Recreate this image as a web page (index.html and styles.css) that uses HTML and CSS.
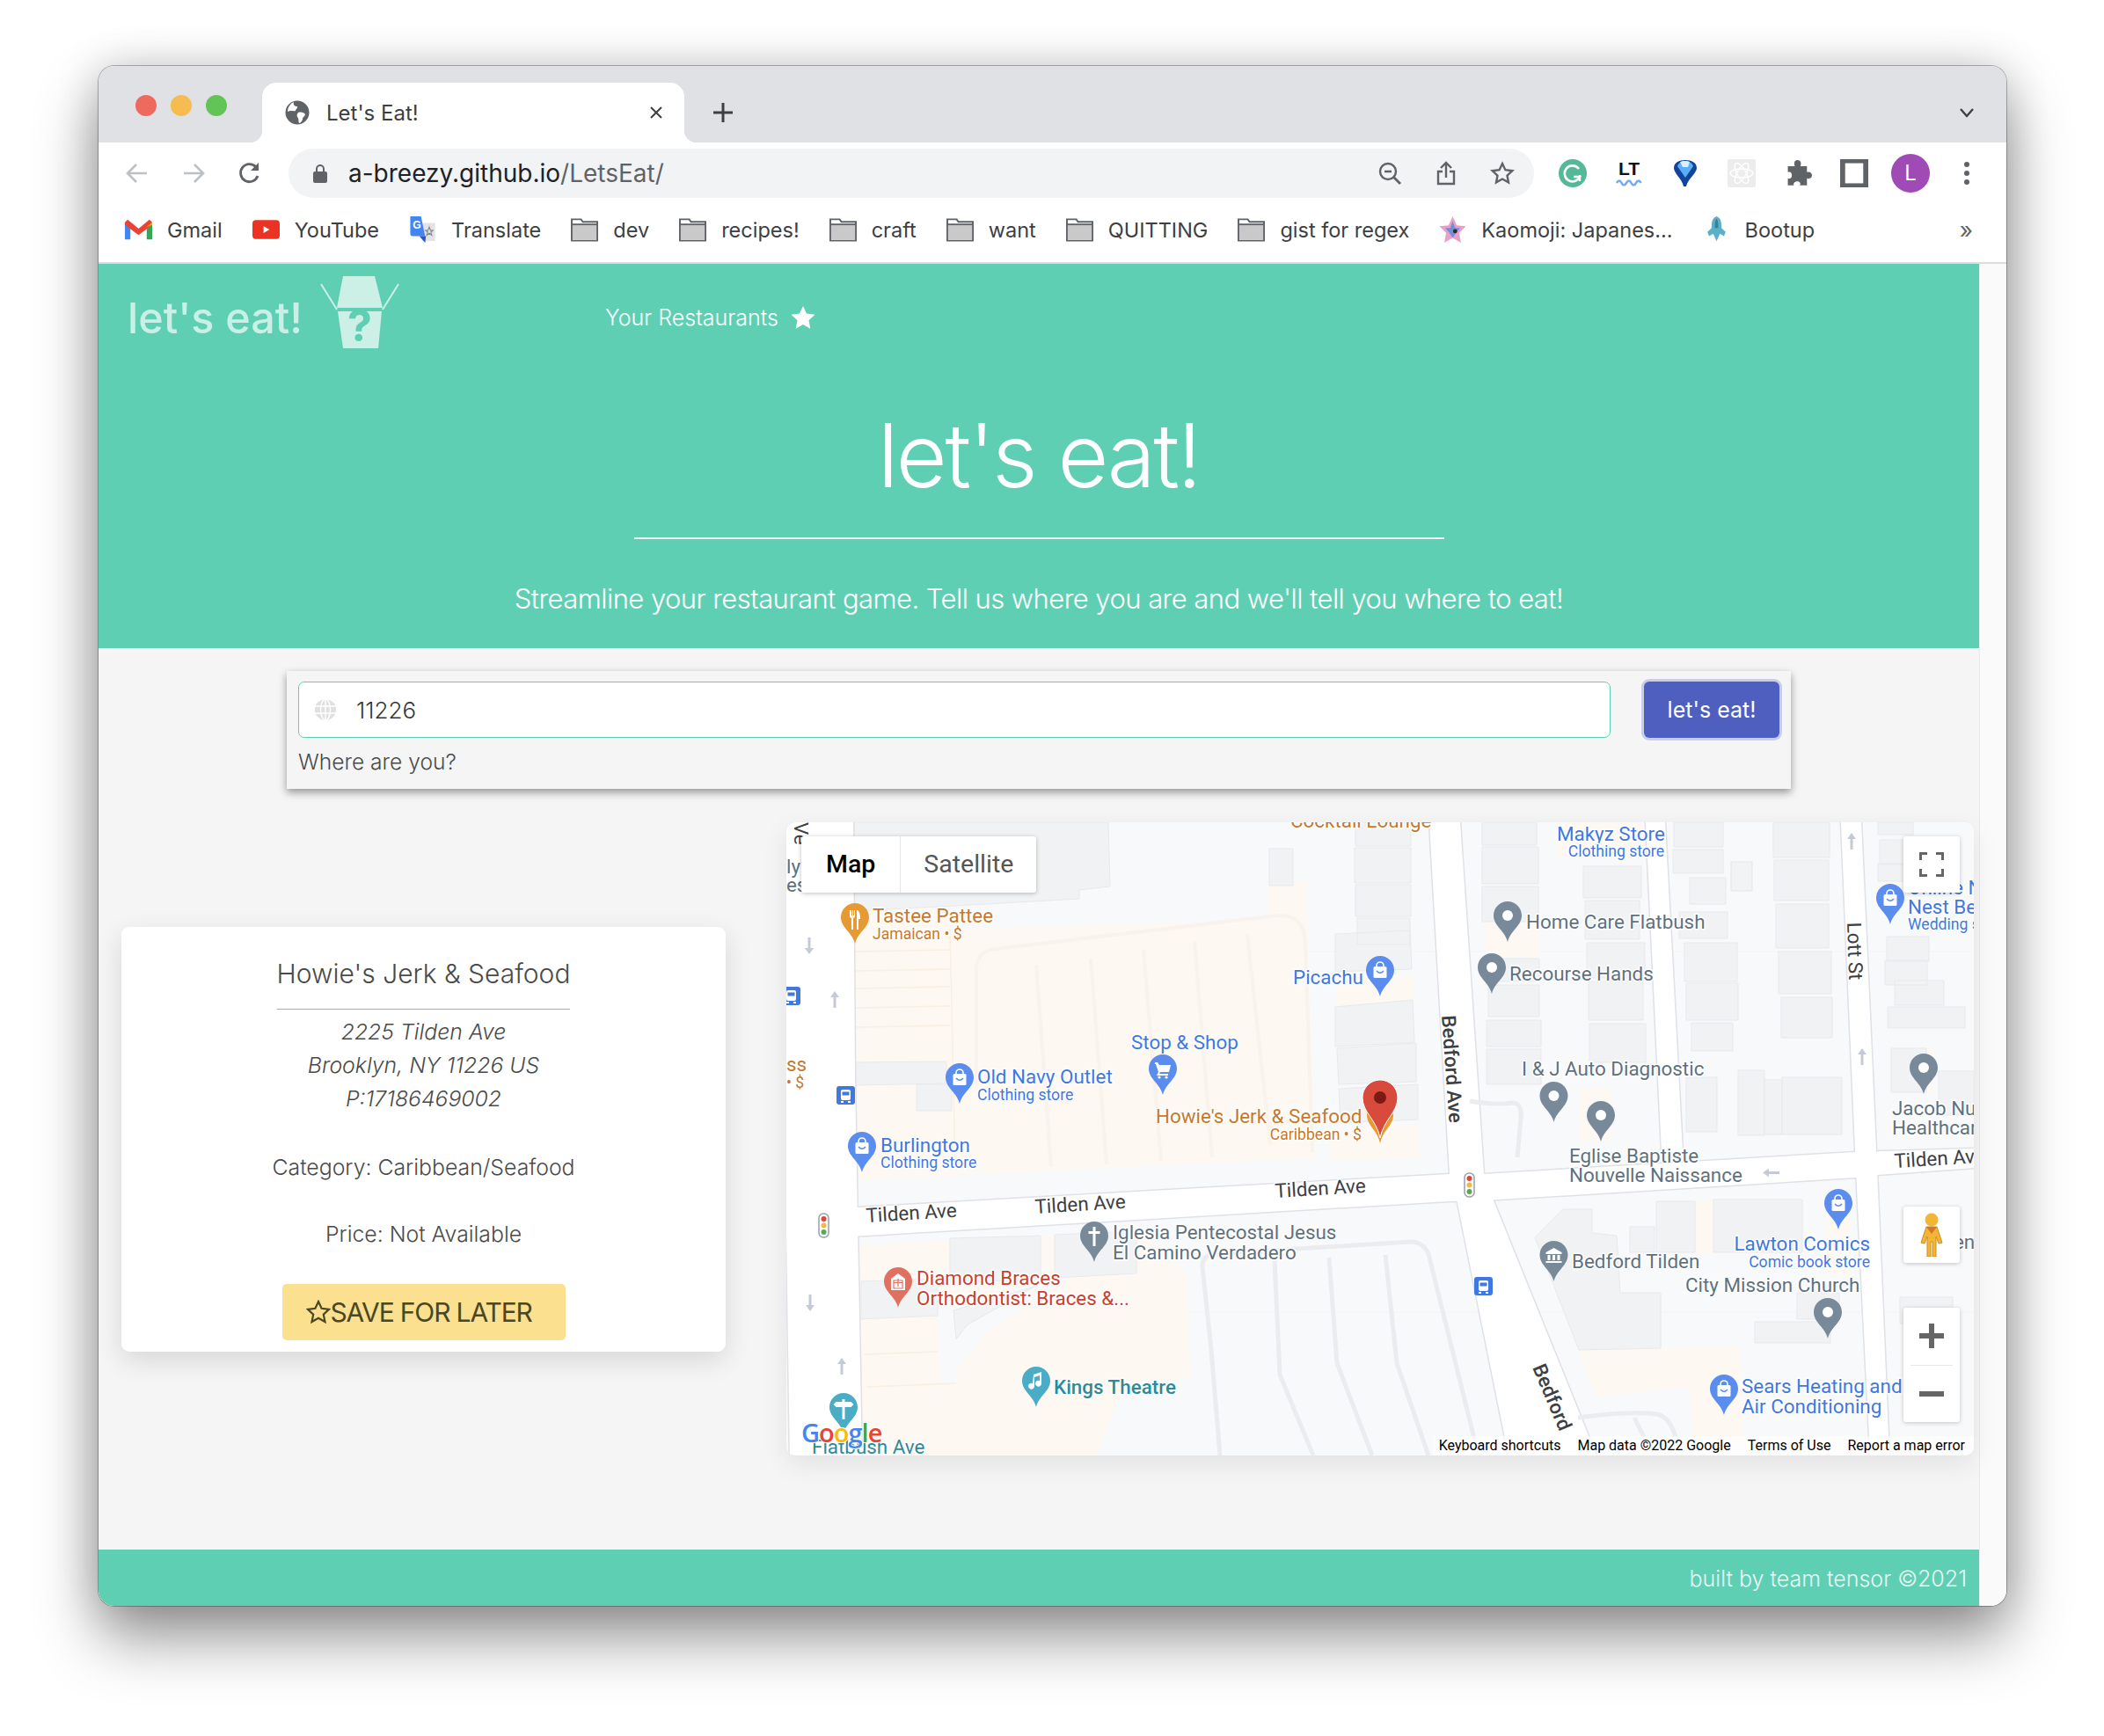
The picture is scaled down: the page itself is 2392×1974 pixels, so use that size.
FILE: index.html
```html
<!DOCTYPE html>
<html lang="en">
<head>
    <meta charset="UTF-8">
    <meta name="viewport" content="width=device-width, initial-scale=1.0">
    <title>Let's Eat!</title>
    <link rel="stylesheet" href="styles.css">
</head>
<body>

<div class="window">
    <div class="tabstrip">
        <div class="lights"><span class="light red"></span><span class="light amber"></span><span class="light green"></span></div>
        <div class="tab">
            <svg class="favicon" viewBox="0 0 28 28"><circle cx="14" cy="14" r="13.5" fill="#5f6368"/><path d="M10 2c-1 3 1 5 4 5 1 2-2 3-2 5-3 1-6-1-9 1C3 8 6 4 10 2zM15 14c3-1 7 0 8 2 0 2-3 3-3 5s-2 5-4 5c-1-3 0-5-2-7-1-2 0-4 1-5z" fill="#fff"/></svg>
            <span class="tab-title">Let's Eat!</span>
            <svg class="tab-close" viewBox="0 0 16 16"><path d="M2 2l12 12M14 2L2 14" stroke="#3c4043" stroke-width="2" fill="none"/></svg>
        </div>
        <svg class="new-tab" viewBox="0 0 24 24"><path d="M12 1v22M1 12h22" stroke="#3c4043" stroke-width="3" fill="none"/></svg>
        <svg class="tab-menu" viewBox="0 0 18 12"><path d="M2 2l7 8 7-8" stroke="#3c4043" stroke-width="2.4" fill="none"/></svg>
    </div>

    <div class="toolbar">
        <div class="tool"><svg viewBox="0 0 28 28" class="ico"><path d="M25 14H4M13 4L3 14l10 10" stroke="#bdc1c6" stroke-width="2.6" fill="none"/></svg></div>
        <div class="tool"><svg viewBox="0 0 28 28" class="ico"><path d="M3 14h21M15 4l10 10-10 10" stroke="#bdc1c6" stroke-width="2.6" fill="none"/></svg></div>
        <div class="tool"><svg viewBox="0 0 28 28" class="ico"><path d="M23 17a10 10 0 1 1-2-10" stroke="#5f6368" stroke-width="2.8" fill="none"/><path d="M24 2v9h-9z" fill="#5f6368"/></svg></div>
        <div class="omnibox">
            <svg class="lock" viewBox="0 0 16 22"><path d="M4 9V6a4 4 0 0 1 8 0v3" stroke="#5f6368" stroke-width="2" fill="none"/><rect x="0" y="9" width="16" height="13" rx="2" fill="#5f6368"/></svg>
            <span class="url">a-breezy.github.io<span class="url-path">/LetsEat/</span></span>
            <div class="omni-icons">
                <div class="tool"><svg viewBox="0 0 28 28" class="ico"><circle cx="12" cy="12" r="9" stroke="#5f6368" stroke-width="2.4" fill="none"/><path d="M18 18l8 8" stroke="#5f6368" stroke-width="2.8"/><path d="M8 12h8" stroke="#5f6368" stroke-width="2.4"/></svg></div>
                <div class="tool"><svg viewBox="0 0 28 28" class="ico"><path d="M14 19V2M8 8l6-6 6 6M10 12H5v14h18V12h-5" stroke="#5f6368" stroke-width="2.4" fill="none"/></svg></div>
                <div class="tool"><svg viewBox="0 0 28 28" class="ico"><path d="M14 3l3.4 7.2 7.9 1-5.800 5.400 1.500 7.800L14 20.500l-7 3.900 1.500-7.800L2.700 11.200l7.900-1z" stroke="#5f6368" stroke-width="2.400" fill="none"/></svg></div>
            </div>
        </div>
        <div class="extensions">
            <div class="tool"><svg viewBox="0 0 32 32" class="ico-lg"><circle cx="16" cy="16" r="16" fill="#55b896"/><path d="M23 11a9 9 0 1 0 1 9h-7" stroke="#fff" stroke-width="2.600" fill="none"/><path d="M24 18v7" stroke="#fff" stroke-width="2.400"/></svg></div>
            <div class="tool"><svg viewBox="0 0 32 32" class="ico-lg"><text x="16" y="18" class="lt-mark">LT</text><path d="M2 27q3-5 5.500 0t5.500 0 5.500 0 5.500 0 5.500 0" stroke="#74a9f7" stroke-width="2.600" fill="none"/></svg></div>
            <div class="tool"><svg viewBox="0 0 32 32" class="ico-lg"><path d="M16 1C9 1 3 4 3 10c0 6 9 12 11 21h3c2-9 12-15 12-21 0-6-6-9-13-9z" fill="#11449a"/><path d="M16 2c-5 0-8 3-9 6l9 13 9-13c-1-3-4-6-9-6z" fill="#5aaef5"/><path d="M10 3l3 6h6l2-6c-3-1.500-8-1.500-11 0z" fill="#d9efff"/></svg></div>
            <div class="tool"><svg viewBox="0 0 32 32" class="ico-lg"><rect width="32" height="32" rx="2" fill="#ececec"/><g fill="none" stroke="#fff" stroke-width="1.400"><ellipse cx="16" cy="16" rx="13" ry="5"/><ellipse cx="16" cy="16" rx="13" ry="5" transform="rotate(60 16 16)"/><ellipse cx="16" cy="16" rx="13" ry="5" transform="rotate(120 16 16)"/></g></svg></div>
            <div class="tool"><svg viewBox="0 0 28 28" class="ico-lg"><path d="M11 2c2-2 6-1 6 2 0 1 0 2-.5 3H23v6c2-1 5 0 5 3s-3 4-5 3v7h-7c1-2 0-4-2.500-4S9 24 10 26H4v-7c2 1 4 0 4-3s-2-4-4-3V7h7c-.5-1-1-3 0-5z" fill="#5f6368"/></svg></div>
            <div class="tool"><svg viewBox="0 0 28 28" class="ico-lg"><rect x="2.500" y="1.500" width="23" height="25" fill="#fff" stroke="#5f6368" stroke-width="5"/></svg></div>
            <div class="tool"><span class="avatar">L</span></div>
            <div class="tool"><svg viewBox="0 0 8 28" class="dots"><circle cx="4" cy="4" r="3"/><circle cx="4" cy="14" r="3"/><circle cx="4" cy="24" r="3"/></svg></div>
        </div>
    </div>

    <div class="bookmarks">
        <a class="bm"><svg class="bm-ico" viewBox="0 0 30 22"><path d="M0 22V3l6 5v14z" fill="#4285f4"/><path d="M30 22V3l-6 5v14z" fill="#34a853"/><path d="M0 3l3-3 12 10L27 0l3 3v3L15 17 0 6z" fill="#ea4335"/><path d="M24 8l6-5v3z" fill="#fbbc05"/></svg>Gmail</a>
        <a class="bm"><svg class="bm-ico" viewBox="0 0 32 22"><rect width="32" height="22" rx="4" fill="#ea3323"/><path d="M13 7l7 4-7 4z" fill="#fff"/></svg>YouTube</a>
        <a class="bm"><svg class="bm-ico" viewBox="0 0 30 32"><path d="M14 8h16v22H14z" fill="#e3e3e3"/><path d="M0 0h13l5 24H3a3 3 0 0 1-3-3z" fill="#4285f4"/><path d="M19 24l-1 8-7-8z" fill="#2a56c6"/><text x="8" y="15" class="tr-mark">G</text><path d="M23 13l1.500 4h3l-2.500 2 1 4-3-2.500-3 2.500 1-4-2.500-2h3z" fill="none" stroke="#80868b" stroke-width="1.200"/></svg>Translate</a>
        <a class="bm"><svg class="bm-ico" viewBox="0 0 32 28"><use href="#folder"/></svg>dev</a>
        <a class="bm"><svg class="bm-ico" viewBox="0 0 32 28"><use href="#folder"/></svg>recipes!</a>
        <a class="bm"><svg class="bm-ico" viewBox="0 0 32 28"><use href="#folder"/></svg>craft</a>
        <a class="bm"><svg class="bm-ico" viewBox="0 0 32 28"><use href="#folder"/></svg>want</a>
        <a class="bm"><svg class="bm-ico" viewBox="0 0 32 28"><use href="#folder"/></svg>QUITTING</a>
        <a class="bm"><svg class="bm-ico" viewBox="0 0 32 28"><use href="#folder"/></svg>gist for regex</a>
        <a class="bm"><svg class="bm-ico" viewBox="0 0 32 32"><path d="M16 0l5 11 11 1-8 8 2 12-10-6-10 6 2-12-8-8 11-1z" fill="#e8a0c8"/><path d="M16 6l3 8h6l-5 6-4 6-4-6-5-6h6z" fill="#6f8fd8"/><circle cx="19" cy="18" r="2.600" fill="#2b2b2b"/></svg>Kaomoji: Japanes...</a>
        <a class="bm"><svg class="bm-ico" viewBox="0 0 28 32"><path d="M14 0c5 2 6 6 6 14l5 5-2 5-5-3-4 9-4-9-5 3-2-5 5-5C8 6 9 2 14 0z" fill="#5bb0c8"/><path d="M14 3c2 2 2 6 2 11h-4c0-5 0-9 2-11z" fill="#37809a"/></svg>Bootup</a>
        <span class="bm-more">»</span>
    </div>

    <svg class="defs" aria-hidden="true">
        <defs>
            <g id="folder"><path d="M1 27V2h11l2 3h17v22z" fill="#fff" stroke="#5f6368" stroke-width="2"/><rect x="2" y="9" width="28" height="17" fill="#c9c9c9"/><path d="M1 8h30" stroke="#5f6368" stroke-width="2"/></g>
        </defs>
    </svg>

    <div class="viewport">
        <div class="page">
            <header class="hero">
                <nav class="site-nav">
                    <div class="brand">
                        <span class="brand-name">let's eat!</span>
                        <svg class="brand-box" viewBox="0 0 90 82"><path d="M26 0h36l9 36H19z" fill="#ccefe6"/><path d="M20 40h50l-4 42H26z" fill="#ccefe6"/><path d="M1 9l18 29M89 9L71 38" stroke="#ccefe6" stroke-width="2" fill="none"/><text x="45" y="74" class="box-mark">?</text></svg>
                    </div>
                    <a class="nav-link">Your Restaurants
                        <svg class="nav-star" viewBox="0 0 28 28"><path d="M14 1l4 8.600 9.500 1.200-7 6.500 1.800 9.400L14 22l-8.300 4.700 1.800-9.400-7-6.500L10 9.600z" fill="#fff"/></svg>
                    </a>
                </nav>
                <h1 class="hero-title">let's eat!</h1>
                <div class="hero-rule"></div>
                <p class="hero-sub">Streamline your restaurant game. Tell us where you are and we'll tell you where to eat!</p>
            </header>

            <section class="search">
                <div class="search-row">
                    <div class="field">
                        <svg class="field-globe" viewBox="0 0 24 24"><circle cx="12" cy="12" r="12" fill="#e0e0e0"/><g stroke="#fff" stroke-width="1.400" fill="none"><ellipse cx="12" cy="12" rx="5.500" ry="12"/><path d="M12 0v24M0 8h24M0 16h24"/></g></svg>
                        <input class="field-input" type="text" value="11226">
                    </div>
                    <button class="go-btn">let's eat!</button>
                </div>
                <p class="search-hint">Where are you?</p>
            </section>

            <section class="results">
                <article class="card">
                    <h2 class="card-title">Howie's Jerk &amp; Seafood</h2>
                    <address class="card-addr">2225 Tilden Ave<br>Brooklyn, NY 11226 US<br>P:17186469002</address>
                    <p class="card-line">Category: Caribbean/Seafood</p>
                    <p class="card-line">Price: Not Available</p>
                    <button class="save-btn">
                        <svg class="save-star" viewBox="0 0 28 28"><path d="M14 2l3.600 7.800 8.400 1-6.200 5.800 1.700 8.400L14 20.800 6.500 25l1.700-8.400L2 10.800l8.400-1z" fill="none" stroke="#4b4722" stroke-width="2.200"/></svg>SAVE FOR LATER
                    </button>
                </article>

                <div class="map">
                    <svg class="map-canvas" viewBox="894 935 1350 720" width="1350" height="720">
                        <defs>
                            <path id="pin" d="M16 0C7.200 0 0 7.200 0 16c0 12 13 17 16 30 3-13 16-18 16-30C32 7.200 24.800 0 16 0z"/>
                            <g id="bag"><rect x="8.500" y="12" width="15" height="13" rx="1.500" fill="#fff"/><path d="M12 13v-2a4 4 0 0 1 8 0v2" stroke="#fff" stroke-width="1.600" fill="none"/><path d="M12 17q4 4.500 8 0" stroke="#5b8def" stroke-width="1.500" fill="none"/></g>
                            <g id="dot"><circle cx="16" cy="16" r="6" fill="#fff"/></g>
                            <g id="bus"><rect width="21" height="21" rx="3" fill="#3f78e0"/><rect x="5" y="4" width="11" height="12" rx="2" fill="#fff"/><rect x="6.500" y="6.500" width="8" height="4" fill="#3f78e0"/><path d="M5 17h3v2H5zM13 17h3v2h-3z" fill="#fff"/></g>
                            <g id="signal"><rect x="1" y="1" width="11" height="27" rx="5" fill="#fff" stroke="#9aa0a6" stroke-width="1.500"/><circle cx="6.500" cy="7" r="3" fill="#d9483b"/><circle cx="6.500" cy="14.500" r="3" fill="#f4b73f"/><circle cx="6.500" cy="22" r="3" fill="#5aa75a"/></g>
                            <path id="arrow" d="M0 7l5-7 5 7H6.500v12h-3V7z"/>
                            <g id="roads">
                                <path d="M892 935h78l2 290 8 440H898l-4-270z"/>
                                <path d="M894 1373l81 0 673-38h39l423-25 134-4v22l-110 8-24 3-423 26-40 1-680 40-73-1z"/>
                                <path d="M1625 935h35l27 400 8 23 120 297h-100l-60-297-7-23z"/>
                                <path d="M1871 935h22l20 375h-24z"/>
                                <path d="M2093 935h23l18 395 14 325h-22l-16-325z"/>
                            </g>
                        </defs>

                        <rect class="ground" x="894" y="935" width="1350" height="720"/>
                        <path class="seam" d="M894 1082h1350M894 1492h1350"/>

                        <!-- commercial areas -->
                        <path class="cream" d="M969 1025l100-2 11 33 361-8v-46l44-1 10 316-518 25z"/>
                        <path class="cream" d="M977 1416l316-16 55 47 6 121-76 4-31 83H977z"/>
                        <path class="cream" d="M1794 1535l184-4 4 109h-57l-4-62-107 10z"/>
                        <path class="cream" d="M1512 1283l100-3 2 37-102 3zM1520 1113l87-3 1 30-88 3zM1770 935h122v38l-122 1zM1690 1030h60v57h-60zM1795 1237h36v60h-36zM2170 1192h28v50h-28zM1927 1366h21v60h-21zM2076 1380h28v70h-28z"/>
                        <path class="ground" d="M1066 1485l151-32-92 59-38 45v16h-18z"/>
                        <path class="cream-line" d="M970 1082l110-2M970 1104l110-2M970 1124l110-2M970 1146l110-2M970 1168l110-2M1080 1056l6 270M982 1540l84-3M985 1577l102-4"/>

                        <!-- buildings -->
                        <g class="bld">
                            <path d="M971 935h289l2 73-35 4v10l-142 8-114 6z"/>
                            <path d="M972 1208l104-1v25l-104 2zM1042 1233h40v30h-40zM1443 965h27v42h-27z"/>
                            <path d="M1541 935h63v27h-63zM1540 964h64v40h-64zM1541 1006h63v36h-63zM1543 1044h60v30h-60zM1518 1062l85-4 2 44-87 3zM1518 1145l88-8 2 48-90 5zM1520 1192l90-6v44l-88 3zM1522 1238l90-5v40l-88 4z"/>
                            <path d="M1685 935h62v26h-62zM1685 963h64v42h-64zM1685 1008h64v40h-64zM1690 1090h60v26h-60zM1692 1120h58v36h-58zM1690 1160h62v30h-62zM1690 1193h62v40h-62z"/>
                            <path d="M1800 985h66v36h-66zM1802 1024h62v44h-62zM1804 1072h66v40h-66zM1806 1116h62v44h-62zM1807 1164h64v44h-64z"/>
                            <path d="M1903 935h56v28h-56zM1902 966h57v27h-57zM1921 998h41v30h-41zM1909 1037h55v30h-55zM1915 1072h60v44h-60zM1917 1118h59v42h-59zM1923 1163h47v32h-47z"/>
                            <path d="M2016 935h64v40h-64zM2017 978h62v46h-62zM2019 1028h60v50h-60zM2022 1082h60v48h-60zM2025 1134h58v46h-58z"/>
                            <path d="M1917 1225h35v62h-35zM1976 1217h30v74h-30zM2006 1228h20v62h-20zM2026 1225h68v65h-68z"/>
                            <path d="M2135 935h40v14h-40zM2137 955h28v28h-28zM2135 982h30v20h-30zM2145 1065h48v28h-48zM2143 1092h48v28h-48zM2154 1115h56v28h-56zM2146 1145h88v24h-88zM2150 1192h40v50h-40zM2204 1218h40v50h-40z"/>
                            <path d="M1745 1407l32-32h33v27l28 3 4 65h46v63l-93 2z"/>
                            <path d="M1883 1366h44v58h-44zM1948 1364h101v60h-101zM1853 1395h28v29h-28zM1995 1503h86v24h-86zM2043 1470h48v30h-48z"/>
                            <path d="M1080 1408l103-3v50l-103 3zM1199 1404l93-4v48l-93 5zM979 1457l87-3v42l-87 4z"/>
                            <path d="M1084 1490l92-27-77 44-12 16z"/>
                            <path d="M2160 1475h60v30h-60z"/>
                        </g>
                        <rect class="plot" x="1968" y="980" width="24" height="33"/>

                        <!-- roads -->
                        <use class="road-edge" href="#roads"/>
                        <use class="road-fill" href="#roads"/>

                        <!-- parking lot and driveway outlines -->
                        <g class="lot">
                            <path d="M1110 1233l0-130q0-22 22-24l320-38q30-2 32 30l8 240M1178 1097l17 230M1240 1090l18 234M1300 1080l20 240M1358 1070l20 246M1418 1062l26 240"/>
                        </g>
                        <g class="drive">
                            <path d="M1387 1655l-10-120-10-95q0-12 12-14l225-14q14 0 20 14l62 250M1449 1433l6 130 38 92M1511 1430l9 120 40 105M1575 1427l13 123 36 105"/>
                            <path d="M1671 1252q30 5 48 2 12 0 10 18l-4 44M1794 1612q60-8 90-4 16 4 22 30M1858 1612l14 28"/>
                        </g>

                        <!-- street names -->
                        <text class="lbl road" transform="translate(903 935) rotate(90)">Ve</text>
                        <text class="lbl road b" transform="translate(1639 1155) rotate(86)">Bedford Ave</text>
                        <text class="lbl road" transform="translate(2100 1049) rotate(88)">Lott St</text>
                        <text class="lbl road b" transform="translate(1742 1555) rotate(67)">Bedford</text>
                        <text class="lbl road" transform="translate(985 1390) rotate(-3.500)">Tilden Ave</text>
                        <text class="lbl road" transform="translate(1177 1380) rotate(-3.500)">Tilden Ave</text>
                        <text class="lbl road" transform="translate(1450 1362) rotate(-3.500)">Tilden Ave</text>
                        <text class="lbl road" transform="translate(2154 1328) rotate(-3.500)">Tilden Ave</text>

                        <!-- one-way arrows -->
                        <g class="arw">
                            <use href="#arrow" transform="translate(920 1085) rotate(180) translate(-5 0)"/>
                            <use href="#arrow" x="944" y="1127"/>
                            <use href="#arrow" transform="translate(926 1491) rotate(180)"/>
                            <use href="#arrow" x="952" y="1544"/>
                            <use href="#arrow" x="2100" y="947"/>
                            <use href="#arrow" x="2112" y="1192"/>
                            <use href="#arrow" transform="translate(2004 1333.500) rotate(-90) translate(-5 0)"/>
                        </g>

                        <!-- transit -->
                        <use href="#bus" x="889" y="1122"/>
                        <use href="#bus" x="951" y="1235"/>
                        <use href="#bus" x="1676" y="1452"/>
                        <use href="#signal" x="930" y="1379"/>
                        <use href="#signal" x="1664" y="1333"/>

                        <!-- places -->
                        <g class="pin orange" transform="translate(956 1027)"><use href="#pin"/><path d="M10 8v6q0 3 2 3v13h2V17q2 0 2-3V8h-1v6h-1V8h-1v6h-1V8zM19 8q3 2 3 10h-2v12h-2V8z" fill="#fff"/></g>
                        <text class="lbl orange" x="992" y="1049">Tastee Pattee</text>
                        <text class="lbl orange sub" x="992" y="1068">Jamaican • $</text>

                        <text class="lbl orange" x="1467" y="941">Cocktail Lounge</text>
                        <text class="lbl grey" x="894" y="993">ly</text>
                        <text class="lbl grey" x="894" y="1014">es</text>
                        <text class="lbl orange" x="894" y="1218">ss</text>
                        <text class="lbl orange sub" x="894" y="1237">• $</text>

                        <g class="pin blue" transform="translate(1553 1087)"><use href="#pin"/><use href="#bag"/></g>
                        <text class="lbl blue" x="1470" y="1119">Picachu</text>

                        <text class="lbl blue" x="1286" y="1193">Stop &amp; Shop</text>
                        <g class="pin blue" transform="translate(1306 1199)"><use href="#pin"/><path d="M7 9h3l2 3h13l-2 8H13l-1 2h10v2H9l2-4-3-9H7z" fill="#fff"/><circle cx="12" cy="26" r="1.600" fill="#fff"/><circle cx="20" cy="26" r="1.600" fill="#fff"/></g>

                        <g class="pin blue" transform="translate(1075 1209)"><use href="#pin"/><use href="#bag"/></g>
                        <text class="lbl blue" x="1111" y="1232">Old Navy Outlet</text>
                        <text class="lbl blue sub" x="1111" y="1251">Clothing store</text>

                        <g class="pin blue" transform="translate(964 1287)"><use href="#pin"/><use href="#bag"/></g>
                        <text class="lbl blue" x="1001" y="1310">Burlington</text>
                        <text class="lbl blue sub" x="1001" y="1328">Clothing store</text>

                        <text class="lbl blue" x="1770" y="956">Makyz Store</text>
                        <text class="lbl blue sub end" x="1892" y="974">Clothing store</text>

                        <g class="pin grey" transform="translate(1698 1025)"><use href="#pin"/><use href="#dot"/></g>
                        <text class="lbl grey" x="1735" y="1056">Home Care Flatbush</text>
                        <g class="pin grey" transform="translate(1680 1084)"><use href="#pin"/><use href="#dot"/></g>
                        <text class="lbl grey" x="1716" y="1115">Recourse Hands</text>
                        <text class="lbl grey" x="1730" y="1223">I &amp; J Auto Diagnostic</text>
                        <g class="pin grey" transform="translate(1750.500 1230)"><use href="#pin"/><use href="#dot"/></g>
                        <g class="pin grey" transform="translate(1804 1252)"><use href="#pin"/><use href="#dot"/></g>
                        <g class="pin grey" transform="translate(2171 1198)"><use href="#pin"/><use href="#dot"/></g>
                        <text class="lbl grey" x="2151" y="1268">Jacob Nu</text>
                        <text class="lbl grey" x="2151" y="1290">Healthcar</text>

                        <text class="lbl blue" x="2169" y="1017">Online N</text>
                        <g class="pin blue" transform="translate(2133 1005)"><use href="#pin"/><use href="#bag"/></g>
                        <text class="lbl blue" x="2169" y="1039">Nest Be</text>
                        <text class="lbl blue sub" x="2169" y="1057">Wedding s</text>

                        <text class="lbl grey" x="1784" y="1322">Eglise Baptiste</text>
                        <text class="lbl grey" x="1784" y="1344">Nouvelle Naissance</text>

                        <g class="pin blue" transform="translate(2074 1352)"><use href="#pin"/><use href="#bag"/></g>
                        <text class="lbl blue end" x="2126" y="1422">Lawton Comics</text>
                        <text class="lbl blue sub end" x="2126" y="1441">Comic book store</text>

                        <g class="pin grey" transform="translate(1750.500 1411)"><use href="#pin"/><path d="M16 8l9 5v2H7v-2zM9 16h3v6H9zM14.500 16h3v6h-3zM20 16h3v6h-3zM7 23h18v2H7z" fill="#fff"/></g>
                        <text class="lbl grey" x="1787" y="1442">Bedford Tilden</text>
                        <text class="lbl grey" x="1916" y="1469">City Mission Church</text>
                        <g class="pin grey" transform="translate(2062 1476)"><use href="#pin"/><use href="#dot"/></g>
                        <text class="lbl grey" x="2221" y="1420">en</text>

                        <g class="pin blue" transform="translate(1944 1563)"><use href="#pin"/><use href="#bag"/></g>
                        <text class="lbl blue" x="1980" y="1584">Sears Heating and</text>
                        <text class="lbl blue" x="1980" y="1607">Air Conditioning</text>

                        <g class="pin grey" transform="translate(1228 1389)"><use href="#pin"/><path d="M14.500 6h3v5h5v3h-5v14h-3V14h-5v-3h5z" fill="#fff"/></g>
                        <text class="lbl grey" x="1265" y="1409">Iglesia Pentecostal Jesus</text>
                        <text class="lbl grey" x="1265" y="1432">El Camino Verdadero</text>

                        <g class="pin salmon" transform="translate(1005 1441)"><use href="#pin"/><path d="M16 7l8 6v13H8V13z" fill="#fff"/><path d="M16 13v9M11.500 17.500h9M11 15h10v9H11z" stroke="#e0705f" stroke-width="1.200" fill="none"/></g>
                        <text class="lbl red" x="1042" y="1461">Diamond Braces</text>
                        <text class="lbl red" x="1042" y="1484">Orthodontist: Braces &amp;...</text>

                        <g class="pin aqua" transform="translate(1162 1554)"><use href="#pin"/><path d="M13 9l9-3v13a3.500 3.500 0 1 1-2-3V10l-6 2v10a3.500 3.500 0 1 1-2-3z" fill="#fff"/></g>
                        <text class="lbl teal b" x="1198" y="1585">Kings Theatre</text>

                        <g class="pin aqua" transform="translate(943 1584)"><use href="#pin"/><path d="M14.500 7h3v3h7l3 3-3 3h-7v14h-3V16h-7l-3-3 3-3h7z" fill="#fff"/></g>
                        <text class="lbl teal" x="923" y="1653">Flatbush Ave</text>

                        <!-- selected result -->
                        <g transform="translate(1554 1254)"><path d="M15 0C7 0 0 6 0 14c0 12 12 17 15 32 3-15 15-20 15-32C30 6 23 0 15 0z" fill="#e59a33"/></g>
                        <text class="lbl orange" x="1314" y="1277">Howie's Jerk &amp; Seafood</text>
                        <text class="lbl orange sub end" x="1548" y="1296">Caribbean • $</text>
                        <g transform="translate(1549 1228)"><path d="M20 0C9 0 0 9 0 20c0 17 16 25 20 46 4-21 20-29 20-46C40 9 31 0 20 0z" fill="#d84b3c" stroke="#fff" stroke-width="1"/><circle cx="20" cy="20" r="7" fill="#7a1a12"/></g>

                        <text class="google" x="911" y="1640"><tspan class="g-blue">G</tspan><tspan class="g-red">o</tspan><tspan class="g-yellow">o</tspan><tspan class="g-blue">g</tspan><tspan class="g-green">l</tspan><tspan class="g-red">e</tspan></text>
                    </svg>

                    <div class="map-type">
                        <span class="map-type-btn on">Map</span>
                        <span class="map-type-btn">Satellite</span>
                    </div>
                    <div class="map-tool map-full">
                        <svg viewBox="0 0 28 28" class="full-ico"><path d="M1.500 9V1.500H9M19 1.500h7.500V9M26.500 19v7.500H19M9 26.500H1.500V19" fill="none" stroke="#666" stroke-width="3"/></svg>
                    </div>
                    <div class="map-tool map-peg">
                        <svg viewBox="0 0 28 50" class="peg-ico"><circle cx="14" cy="8" r="7.500" fill="#f2b535"/><path d="M8 16h12l6 18-4 1-3-8v23h-4V33h-2v17H9V27l-3 8-4-1z" fill="#f2b535" stroke="#c98f1e" stroke-width="1"/><path d="M8 16h12l-6 8z" fill="#d2762b"/></svg>
                    </div>
                    <div class="map-tool map-zoom">
                        <div class="zoom-btn"><svg viewBox="0 0 28 28" class="zoom-ico"><path d="M14 0v28M0 14h28" stroke="#666" stroke-width="6"/></svg></div>
                        <div class="zoom-rule"></div>
                        <div class="zoom-btn"><svg viewBox="0 0 28 28" class="zoom-ico"><path d="M0 14h28" stroke="#666" stroke-width="6"/></svg></div>
                    </div>
                    <div class="map-attr">
                        <span>Keyboard shortcuts</span>
                        <span>Map data ©2022 Google</span>
                        <span>Terms of Use</span>
                        <span>Report a map error</span>
                    </div>
                </div>
            </section>

            <footer class="foot">built by team tensor ©2021</footer>
        </div>
        <div class="scrollbar"></div>
    </div>
</div>

</body>
</html>
```

FILE: styles.css
```css
* {
    box-sizing: border-box;
}

html, body {
    margin: 0;
    padding: 0;
    height: 100%;
    background: #fff;
    overflow: hidden;
}

body {
    font-family: Inter, "Liberation Sans", sans-serif;
    padding: 75px 0 0 112px;
}

.window {
    width: 2169px;
    height: 1751px;
    border-radius: 18px;
    overflow: hidden;
    display: flex;
    flex-direction: column;
    background: #fff;
    box-shadow: 0 0 0 1px rgba(0, 0, 0, 0.28), 0 36px 70px rgba(0, 0, 0, 0.42), 0 0 50px rgba(0, 0, 0, 0.16);
}

/* browser chrome */
.tabstrip {
    height: 87px;
    flex: none;
    display: flex;
    background: #dfe1e5;
}

.lights {
    display: flex;
    gap: 16px;
    padding: 33px 0 0 42px;
}

.light {
    width: 24px;
    height: 24px;
    border-radius: 50%;
}

.light.red { background: #ee6a5f; }
.light.amber { background: #f5bd4f; }
.light.green { background: #61c454; }

.tab {
    position: relative;
    width: 480px;
    height: 68px;
    margin: 19px 0 0 40px;
    padding: 0 24px 0 26px;
    display: flex;
    align-items: center;
    background: #fff;
    border-radius: 16px 16px 0 0;
}

.tab::before,
.tab::after {
    content: "";
    position: absolute;
    bottom: 0;
    width: 14px;
    height: 14px;
}

.tab::before {
    left: -14px;
    background: radial-gradient(circle at 0 0, transparent 14px, #fff 14.5px);
}

.tab::after {
    right: -14px;
    background: radial-gradient(circle at 100% 0, transparent 14px, #fff 14.5px);
}

.favicon {
    width: 28px;
    height: 28px;
    flex: none;
}

.tab-title {
    margin-left: 19px;
    font-size: 24px;
    color: #3c4043;
}

.tab-close {
    width: 16px;
    height: 16px;
    margin-left: auto;
}

.new-tab {
    width: 24px;
    height: 24px;
    margin: 41px 0 0 32px;
}

.tab-menu {
    width: 18px;
    height: 12px;
    margin: 47px 36px 0 auto;
}

.toolbar {
    height: 70px;
    flex: none;
    display: flex;
    align-items: center;
    padding-left: 12px;
    background: #fff;
}

.tool {
    width: 64px;
    height: 56px;
    flex: none;
    display: flex;
    align-items: center;
    justify-content: center;
}

.ico {
    width: 28px;
    height: 28px;
}

.ico-lg {
    width: 32px;
    height: 32px;
}

.dots {
    width: 8px;
    height: 28px;
    fill: #5f6368;
}

.avatar {
    width: 44px;
    height: 44px;
    border-radius: 50%;
    background: #a04ab5;
    color: #fff;
    font-size: 24px;
    line-height: 44px;
    text-align: center;
}

.omnibox {
    flex: 1;
    height: 56px;
    margin-left: 12px;
    padding: 0 4px 0 28px;
    display: flex;
    align-items: center;
    background: #f1f3f4;
    border-radius: 28px;
}

.lock {
    width: 16px;
    height: 22px;
    flex: none;
}

.url {
    margin-left: 24px;
    font-size: 28px;
    color: #202124;
}

.url-path {
    color: #5f6368;
}

.omni-icons {
    margin-left: auto;
    display: flex;
}

.extensions {
    display: flex;
    margin: 0 13px 0 12px;
}

.lt-mark {
    font: 700 21px "Liberation Sans", sans-serif;
    text-anchor: middle;
    fill: #111;
}

.tr-mark {
    font: 700 13px "Liberation Sans", sans-serif;
    text-anchor: middle;
    fill: #fff;
}

.bookmarks {
    height: 68px;
    flex: none;
    display: flex;
    align-items: center;
    gap: 34px;
    padding: 0 0 8px 30px;
    background: #fff;
    border-bottom: 2px solid #dadce0;
    font-size: 23.5px;
    color: #3c4043;
}

.bm {
    display: flex;
    align-items: center;
    gap: 17px;
    white-space: nowrap;
}

.bm-ico {
    width: 31px;
    height: 30px;
    flex: none;
}

.bm-more {
    margin: 0 38px 0 auto;
    font-size: 26px;
    color: #5f6368;
}

.defs {
    position: absolute;
    width: 0;
    height: 0;
}

/* page */
.viewport {
    flex: 1;
    display: flex;
    min-height: 0;
}

.page {
    flex: 1;
    display: flex;
    flex-direction: column;
    background: #f5f5f5;
    color: #4a4a4a;
}

.scrollbar {
    width: 31px;
    background: #fafafa;
    border-left: 1px solid #ebebeb;
}

.hero {
    height: 437px;
    flex: none;
    background: #5fcfb4;
    color: #fff;
    text-align: center;
    font-weight: 300;
}

.site-nav {
    height: 110px;
    display: flex;
    align-items: center;
    padding: 12px 0 0 33px;
}

.brand {
    display: flex;
    align-items: center;
    gap: 20px;
    width: 543px;
}

.brand-name {
    font-size: 48.5px;
    font-weight: 500;
    color: #c9f0e6;
    white-space: nowrap;
}

.brand-box {
    width: 90px;
    height: 82px;
    margin-top: -13px;
}

.box-mark {
    font: 700 50px Inter, sans-serif;
    text-anchor: middle;
    fill: #5fcfb4;
}

.nav-link {
    display: flex;
    align-items: center;
    gap: 14px;
    font-size: 25px;
    font-weight: 300;
}

.nav-star {
    width: 28px;
    height: 28px;
}

.hero-title {
    margin: 0;
    padding-top: 48px;
    font-size: 100px;
    letter-spacing: -2.6px;
    line-height: 120px;
    font-weight: 300;
}

.hero-rule {
    width: 921px;
    height: 2px;
    margin: 33px auto 0;
    background: #fff;
}

.hero-sub {
    margin: 48px 0 0;
    font-size: 31px;
    letter-spacing: -0.55px;
    line-height: 40px;
    font-weight: 300;
}

.search {
    width: 1710px;
    height: 134px;
    flex: none;
    margin: 26px auto 0;
    padding: 12px 13px;
    background: #f5f5f5;
    box-shadow: 0 4px 9px rgba(0, 0, 0, 0.4);
}

.search-row {
    display: flex;
    gap: 38px;
}

.field {
    position: relative;
    flex: 1;
}

.field-globe {
    position: absolute;
    left: 19px;
    top: 20px;
    width: 24px;
    height: 24px;
}

.field-input {
    width: 100%;
    height: 64px;
    padding: 0 0 0 65px;
    border: 1px solid #5fcfb4;
    border-radius: 7px;
    background: #fff;
    font: 300 26px Inter, sans-serif;
    color: #363636;
    outline: none;
}

.go-btn {
    width: 154px;
    height: 64px;
    border: none;
    border-radius: 6px;
    background: #4e5fc0;
    box-shadow: 0 0 0 3px #c8cdea;
    color: #fff;
    font: 400 25px Inter, sans-serif;
}

.search-hint {
    margin: 9px 0 0;
    font-size: 24.6px;
    line-height: 36px;
    font-weight: 300;
}

.results {
    display: flex;
    align-items: center;
    gap: 69px;
    margin-top: 38px;
    padding: 0 6px 0 26px;
}

.card {
    width: 687px;
    height: 483px;
    flex: none;
    padding-top: 34px;
    text-align: center;
    background: #fff;
    border-radius: 9px;
    box-shadow: 0 10px 30px rgba(0, 0, 0, 0.12);
    font-weight: 300;
    font-size: 24.8px;
    line-height: 38px;
}

.card-title {
    display: inline-block;
    margin: 0;
    padding-bottom: 21px;
    border-bottom: 1px solid #5fcfb4;
    font-size: 30px;
    font-weight: 300;
    line-height: 38px;
}

.card-addr {
    margin-top: 6px;
    font-style: italic;
}

.card-line {
    margin: 40px 0 0;
}

.card-line + .card-line {
    margin-top: 38px;
}

.save-btn {
    display: flex;
    align-items: center;
    gap: 0;
    width: 322px;
    height: 64px;
    margin: 38px auto 0;
    padding: 0 0 0 27px;
    border: none;
    border-radius: 5px;
    background: #fbe08f;
    color: #4b4722;
    font: 400 30px Inter, sans-serif;
    letter-spacing: -1.15px;
    white-space: nowrap;
}

.save-star {
    width: 28px;
    height: 28px;
    flex: none;
}

/* map */
.map {
    position: relative;
    width: 1350px;
    height: 720px;
    flex: none;
    border-radius: 10px;
    overflow: hidden;
    box-shadow: 0 10px 30px rgba(0, 0, 0, 0.08);
}

.map-canvas {
    display: block;
}

.ground { fill: #f8f9fb; }
.seam { stroke: #f3f4f6; stroke-width: 1; fill: none; }
.cream { fill: #fdf8f2; }
.cream-line { stroke: #f9efe3; stroke-width: 1.5; fill: none; }
.plot { fill: #f1f3f4; stroke: #e3e5e8; stroke-width: 1; }
.bld path { fill: #f1f2f3; stroke: #e8e9ec; stroke-width: 1; }
.road-edge { fill: #dfe1e7; stroke: #dfe1e7; stroke-width: 3; }
.road-fill { fill: #fff; }
.lot path { fill: none; stroke: #f9f3ec; stroke-width: 4; }
.drive path { fill: none; stroke: #ebecef; stroke-width: 5; }
.arw { fill: #c5cad6; }

.pin.orange { fill: #e59a33; }
.pin.blue { fill: #5b8def; }
.pin.grey { fill: #78899a; }
.pin.salmon { fill: #e0705f; }
.pin.aqua { fill: #4bacc6; }

.lbl {
    font-family: Roboto, sans-serif;
    font-size: 22.4px;
    paint-order: stroke;
    stroke: #fff;
    stroke-width: 3px;
    stroke-linejoin: round;
}

.lbl.sub { font-size: 17.6px; }
.lbl.end { text-anchor: end; }
.lbl.b { font-weight: 500; }
.lbl.road { fill: #3c4043; }
.lbl.orange { fill: #c6792c; }
.lbl.blue { fill: #3f78e0; }
.lbl.grey { fill: #5f7180; }
.lbl.red { fill: #c8402e; }
.lbl.teal { fill: #2c8a99; }

.google {
    font-family: "Open Sans", sans-serif;
    font-size: 29px;
    font-weight: 600;
    letter-spacing: -1px;
    paint-order: stroke;
    stroke: #fff;
    stroke-width: 2px;
}

.g-blue { fill: #4285f4; }
.g-red { fill: #ea4335; }
.g-yellow { fill: #fbbc05; }
.g-green { fill: #34a853; }

.map-type {
    position: absolute;
    left: 17px;
    top: 16px;
    height: 64px;
    display: flex;
    background: #fff;
    border-radius: 3px;
    box-shadow: 0 1px 5px rgba(0, 0, 0, 0.25);
    font: 400 28.5px/64px Roboto, sans-serif;
    color: #565656;
}

.map-type-btn {
    padding: 0 26px;
    border-left: 1px solid #e6e6e6;
}

.map-type-btn.on {
    padding: 0 28px;
    border-left: none;
    color: #000;
    font-weight: 500;
}

.map-tool {
    position: absolute;
    right: 16px;
    width: 64px;
    background: #fff;
    border-radius: 3px;
    box-shadow: 0 1px 5px rgba(0, 0, 0, 0.22);
    display: flex;
    align-items: center;
    justify-content: center;
}

.map-full {
    top: 16px;
    height: 64px;
}

.full-ico {
    width: 28px;
    height: 28px;
}

.map-peg {
    top: 437px;
    height: 64px;
}

.peg-ico {
    width: 28px;
    height: 50px;
}

.map-zoom {
    top: 552px;
    height: 130px;
    flex-direction: column;
}

.zoom-btn {
    flex: 1;
    width: 100%;
    display: flex;
    align-items: center;
    justify-content: center;
}

.zoom-ico {
    width: 28px;
    height: 28px;
}

.zoom-rule {
    width: 48px;
    height: 1px;
    background: #e6e6e6;
}

.map-attr {
    position: absolute;
    right: 0;
    bottom: 0;
    height: 22px;
    display: flex;
    gap: 19px;
    padding: 0 10px 0 7px;
    background: rgba(255, 255, 255, 0.7);
    font: 400 16px/22px Roboto, sans-serif;
    color: #000;
    white-space: nowrap;
}

.foot {
    margin-top: auto;
    height: 64px;
    flex: none;
    padding-right: 14px;
    background: #5fcfb4;
    color: #e8f8f4;
    font-size: 25px;
    font-weight: 300;
    line-height: 66px;
    text-align: right;
}
```
